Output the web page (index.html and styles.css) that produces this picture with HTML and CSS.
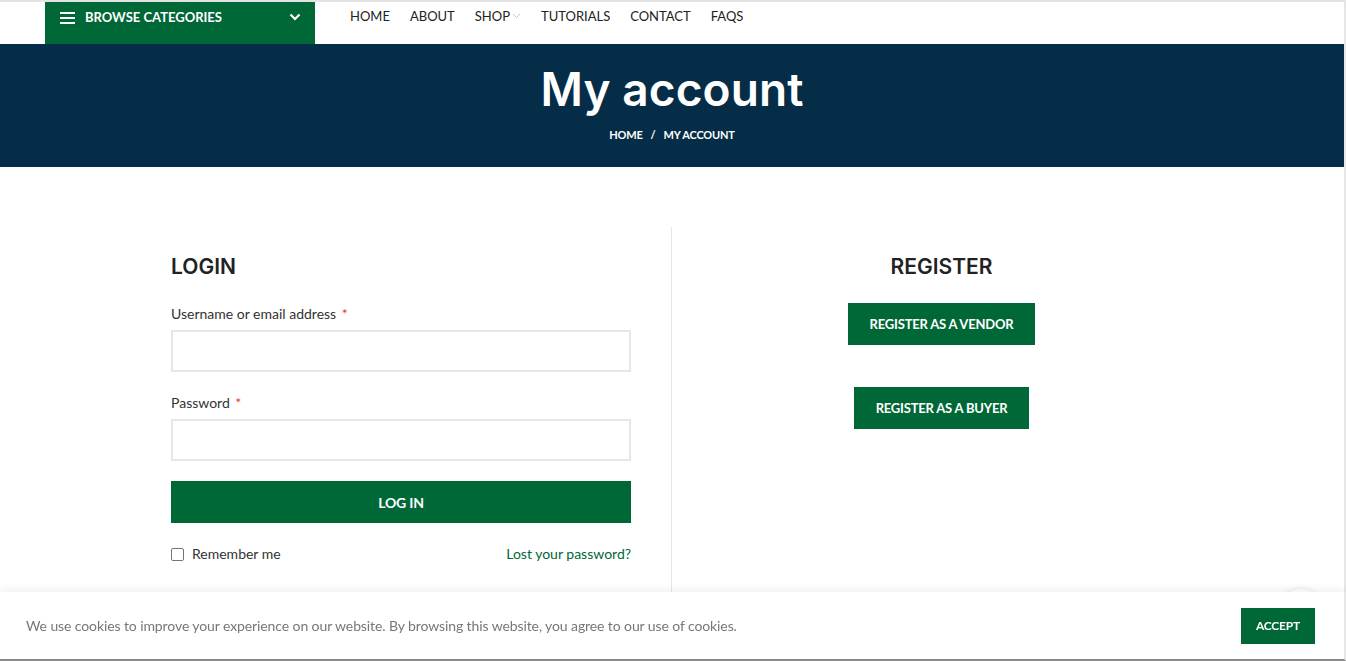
FILE: index.html
```html
<!DOCTYPE html>
<html lang="en">
<head>
<meta charset="utf-8">
<title>My account</title>
<link rel="stylesheet" href="styles.css">
</head>
<body>
<div class="page">
  <header class="topbar">
    <div class="browse">
      <svg class="burger" width="15" height="12" viewBox="0 0 15 12"><rect x="0" y="0" width="15" height="2"/><rect x="0" y="5" width="15" height="2"/><rect x="0" y="10" width="15" height="2"/></svg>
      <span class="browse-label">BROWSE CATEGORIES</span>
      <svg class="browse-chev" width="12" height="8" viewBox="0 0 12 8"><path d="M1.5 1.5 L6 6 L10.5 1.5" fill="none" stroke="#fff" stroke-width="2.2"/></svg>
    </div>
    <nav class="menu">
      <a class="menu-item">HOME</a>
      <a class="menu-item">ABOUT</a>
      <a class="menu-item">SHOP<svg class="shop-chev" width="9" height="6" viewBox="0 0 9 6"><path d="M1 1 L4.5 4.5 L8 1" fill="none" stroke="#c8c8c8" stroke-width="1"/></svg></a>
      <a class="menu-item">TUTORIALS</a>
      <a class="menu-item">CONTACT</a>
      <a class="menu-item">FAQS</a>
    </nav>
  </header>

  <section class="hero">
    <h1 class="hero-title">My account</h1>
    <div class="crumbs"><a>HOME</a><span class="sep">/</span><span>MY ACCOUNT</span></div>
  </section>

  <main class="account">
    <div class="col col-login">
      <h2 class="col-title">LOGIN</h2>
      <form class="login-form">
        <label class="field-label">Username or email address <span class="req">*</span></label>
        <input class="field-input" type="text">
        <label class="field-label field-gap">Password <span class="req">*</span></label>
        <input class="field-input" type="password">
        <button class="btn btn-block" type="button">LOG IN</button>
        <div class="form-row">
          <label class="remember"><span class="check"></span>Remember me</label>
          <a class="lost">Lost your password?</a>
        </div>
      </form>
    </div>
    <div class="col col-register">
      <h2 class="col-title">REGISTER</h2>
      <a class="btn btn-reg">REGISTER AS A VENDOR</a>
      <a class="btn btn-reg btn-reg2">REGISTER AS A BUYER</a>
    </div>
  </main>
</div>

<div class="totop"></div>
<div class="cookie">
  <p class="cookie-text">We use cookies to improve your experience on our website. By browsing this website, you agree to our use of cookies.</p>
  <a class="btn btn-accept">ACCEPT</a>
</div>
</body>
</html>
```
FILE: styles.css
```css
* { box-sizing: border-box; }
html, body { margin: 0; padding: 0; }
body {
  font-family: Lato, "Liberation Sans", sans-serif;
  color: #333;
  background: #fff;
  height: 661px;
  overflow: hidden;
}
a { text-decoration: none; color: inherit; }

.page {
  width: 1346px;
  border-top: 2px solid #e3e3e3;
  border-right: 2px solid #e6e6e6;
  min-height: 659px;
}

.topbar {
  display: flex;
  align-items: flex-start;
  height: 42px;
  padding-left: 45px;
}
.browse {
  width: 270px;
  height: 42px;
  background: #006837;
  color: #fff;
  display: flex;
  align-items: flex-start;
  padding: 5px 14px 0 15px;
}
.burger { fill: #fff; margin-top: 5px; }
.browse-label {
  font-weight: 700;
  font-size: 13px;
  line-height: 20px;
  margin-left: 10px;
}
.browse-chev { margin-left: auto; margin-top: 6px; }

.menu {
  display: flex;
  gap: 20px;
  padding-left: 35px;
  padding-top: 4px;
}
.menu-item {
  font-size: 13px;
  line-height: 20px;
  color: #222;
  display: flex;
  align-items: center;
}
.shop-chev { margin-left: 2px; }

.hero {
  background: #052d47;
  height: 123px;
  display: flex;
  flex-direction: column;
  align-items: center;
  padding-top: 15px;
}
.hero-title {
  margin: 0;
  font-family: Inter, "Open Sans", sans-serif;
  font-weight: 600;
  font-size: 46px;
  line-height: 60px;
  color: #fff;
  letter-spacing: 0.1px;
}
.crumbs {
  margin-top: 9px;
  font-size: 11px;
  font-weight: 700;
  line-height: 14px;
  color: #fff;
  letter-spacing: -0.2px;
}
.crumbs .sep { margin: 0 8px; }

.account {
  display: flex;
  margin: 60px 0 0 131px;
}
.col {
  padding: 20px 40px 0;
  min-height: 366px;
}
.col-login { width: 541px; border-right: 1px solid #e6e6e6; }
.col-register {
  width: 539px;
  display: flex;
  flex-direction: column;
  align-items: center;
}
.col-title {
  margin: 0;
  font-family: Inter, "Open Sans", sans-serif;
  font-weight: 600;
  font-size: 21px;
  line-height: 40px;
  color: #222;
}

.login-form { margin-top: 17px; display: flex; flex-direction: column; }
.field-label {
  font-size: 14px;
  line-height: 20px;
  color: #333;
  margin-bottom: 6px;
}
.field-gap { margin-top: 21px; }
.req { color: #e2401c; margin-left: 2px; }
.field-input {
  height: 42px;
  border: 2px solid #e6e6e6;
  width: 100%;
  outline: none;
  font-family: inherit;
}

.btn {
  background: #006837;
  color: #fff;
  font-weight: 700;
  font-size: 13px;
  letter-spacing: -0.2px;
  display: flex;
  align-items: center;
  justify-content: center;
  border: 0;
  font-family: inherit;
}
.btn-block {
  margin-top: 20px;
  height: 42px;
  width: 100%;
  font-size: 14px;
}
.form-row {
  margin-top: 21px;
  display: flex;
  justify-content: space-between;
  font-size: 14px;
  line-height: 20px;
}
.remember { display: flex; align-items: center; color: #333; }
.check {
  width: 13px;
  height: 13px;
  border: 1px solid #767676;
  border-radius: 2px;
  margin-right: 8px;
}
.lost { color: #006837; }

.btn-reg {
  height: 42px;
  padding: 0 22px;
  margin-top: 16px;
}
.btn-reg2 { margin-top: 42px; }

.totop {
  position: fixed;
  right: 25px;
  bottom: 32px;
  width: 40px;
  height: 40px;
  border-radius: 50%;
  background: #fff;
  box-shadow: 0 0 6px rgba(0,0,0,0.12);
}
.cookie {
  position: fixed;
  left: 0;
  bottom: 0;
  width: 1346px;
  height: 69px;
  background: #fff;
  border-right: 2px solid #e6e6e6;
  border-bottom: 2px solid #8a8a8a;
  box-shadow: 0 -3px 8px rgba(0,0,0,0.06);
  display: flex;
  align-items: center;
  justify-content: space-between;
  padding: 0 29px 0 26px;
}
.cookie-text {
  margin: 0;
  font-size: 14px;
  color: #777;
  letter-spacing: -0.1px;
}
.btn-accept {
  width: 74px;
  height: 36px;
  font-size: 12px;
}
```
